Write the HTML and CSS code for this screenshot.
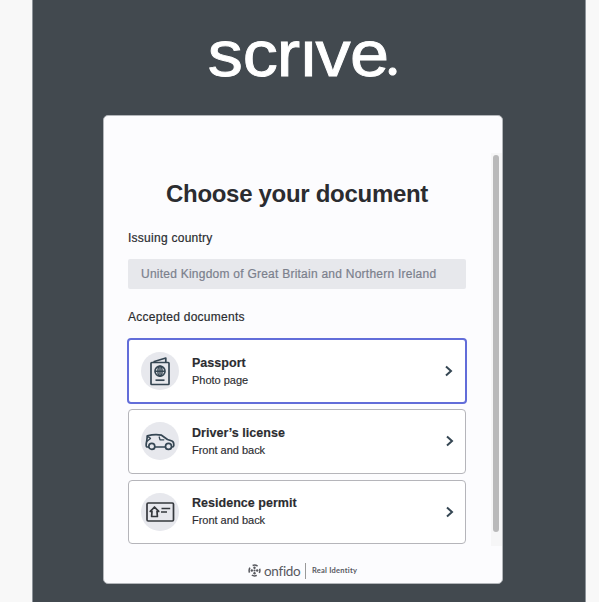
FILE: index.html
```
<!DOCTYPE html>
<html lang="en">
<head>
<meta charset="utf-8">
<title>Choose your document</title>
<link rel="stylesheet" href="styles.css">
</head>
<body>
<main class="panel">
  <svg class="logo" width="210" height="84" viewBox="0 -16 210 84" role="img" aria-label="scrive.">
    <text class="wordmark" transform="translate(0 45) scale(1.08 1)" x="1.7 34.1 65.6 85.8 101.3 133.4" y="0">scrıve</text>
    <text class="wordmark dot" x="180" y="44">.</text>
  </svg>
  <section class="card">
    <div class="scroll">
      <div class="content">
        <h1>Choose your document</h1>
        <div class="label country-label">Issuing country</div>
        <div class="country">United Kingdom of Great Britain and Northern Ireland</div>
        <div class="label docs-label">Accepted documents</div>
        <div class="documents">
          <button class="document selected">
            <span class="icon"><svg width="38" height="38" viewBox="0 0 38 38"><g fill="none" stroke="#354653" stroke-width="1.7" stroke-linejoin="round"><rect x="10" y="10.5" width="18" height="22" rx=".8"/><path d="M12.5 9.8 24.8 6V10"/><circle cx="19" cy="19.2" r="5"/><ellipse cx="19" cy="19.2" rx="2.1" ry="5" stroke-width="1.4"/><path d="M14 19.2H24M19 14.2V24.2" stroke-width="1.4"/><path d="M14.5 28.2H23.5"/></g></svg></span>
            <span class="copy"><b>Passport</b><span>Photo page</span></span>
            <svg class="chevron" width="10" height="12" viewBox="0 0 10 12"><path d="M2 1.5 7 6 2 10.5"/></svg>
          </button>
          <button class="document">
            <span class="icon"><svg width="38" height="38" viewBox="0 0 38 38"><g fill="none" stroke="#354653" stroke-width="1.7" stroke-linejoin="round" stroke-linecap="round"><path d="M7.4 25H6Q5 24.8 5.2 22L5.8 18.5 6.3 13.8Q14 12 20.5 13.2L26.5 17.5 31 19Q33 19.8 32.8 23.5 32.7 25 31.3 25M14.1 25H24"/><circle cx="10.8" cy="24.4" r="3"/><circle cx="27.5" cy="24.4" r="3"/><path d="M6.3 14.2 9.5 16.4 6 19.2M18.2 15 19 17.8H22.8" stroke-width="1.3"/></g></svg></span>
            <span class="copy"><b>Driver’s license</b><span>Front and back</span></span>
            <svg class="chevron" width="10" height="12" viewBox="0 0 10 12"><path d="M2 1.5 7 6 2 10.5"/></svg>
          </button>
          <button class="document">
            <span class="icon"><svg width="38" height="38" viewBox="0 0 38 38"><g fill="none" stroke="#35383d" stroke-width="1.7" stroke-linejoin="round"><rect x="6" y="10" width="26.5" height="18" rx="1.2"/><path d="M13.5 14 9.3 18.4H11L10.6 23.5H16.4L16 18.4H17.7ZM20.5 15.5H29.2M20 19H26"/></g></svg></span>
            <span class="copy"><b>Residence permit</b><span>Front and back</span></span>
            <svg class="chevron" width="10" height="12" viewBox="0 0 10 12"><path d="M2 1.5 7 6 2 10.5"/></svg>
          </button>
        </div>
      </div>
      <div class="track"><div class="thumb"></div></div>
    </div>
    <footer>
      <svg width="13" height="13" viewBox="0 0 13 13"><g fill="none" stroke="#57585e"><circle cx="6.5" cy="6.5" r="5.4" stroke-width="1.5" stroke-dasharray="5.2 3.28" stroke-dashoffset="2.6"/></g><g fill="#57585e"><circle cx="6.5" cy="3.8" r="1.2"/><circle cx="6.5" cy="9.2" r="1.2"/><circle cx="3.8" cy="6.5" r="1.2"/><circle cx="9.2" cy="6.5" r="1.2"/><circle cx="6.5" cy="6.5" r="1.1"/></g></svg>
      <span class="brand">onfido</span>
      <span class="tagline">Real Identity</span>
    </footer>
  </section>
</main>
</body>
</html>
```
FILE: styles.css
```
* { box-sizing: border-box; }
body {
  margin: 0;
  height: 602px;
  overflow: hidden;
  background: #f8f8f8;
  color: #2b2c30;
  font-family: "Liberation Sans", Arial, sans-serif;
}
.panel {
  width: 554px;
  height: 602px;
  margin-left: 32px;
  padding-top: 15px;
  background: #42494f;
  border: solid #8e949a;
  border-width: 0 1px;
}
.logo { display: block; margin-left: 173px; overflow: visible; }
.wordmark {
  fill: #fff;
  font-family: "Liberation Sans", Arial, sans-serif;
  font-size: 65px;
  stroke: #fff;
  stroke-width: .9;
}
.dot { font-family: Lato, sans-serif; font-size: 56px; }
.card {
  width: 400px;
  height: 469px;
  margin: 16px 0 0 70px;
  padding-top: 37px;
  background: #fcfcfe;
  border: 1px solid #b3b6ba;
  border-radius: 5px;
}
.scroll { display: flex; justify-content: space-between; height: 393px; }
.content { width: 363px; padding-left: 23px; }
h1 {
  margin: 27px 0 0 39px;
  font-size: 24px;
  line-height: 28px;
  letter-spacing: -.3px;
  white-space: nowrap;
}
.label { margin-left: 1px; font-size: 12px; line-height: 16px; letter-spacing: .26px; -webkit-text-stroke: .2px; }
.country-label { margin-top: 22px; }
.country {
  width: 338px;
  height: 30px;
  margin: 13px 0 0 1px;
  padding-left: 13px;
  border-radius: 2px;
  background: #e7e8ec;
  color: #7b808c;
  font-size: 12px;
  line-height: 30px;
  letter-spacing: .24px;
  white-space: nowrap;
  -webkit-text-stroke: .2px;
}
.docs-label { margin-top: 20px; }
.documents { display: grid; gap: 6px; width: 340px; margin-top: 13px; }
.document {
  display: flex;
  align-items: center;
  width: 338px;
  height: 64.5px;
  margin: 0 0 0 1px;
  padding: 0 10px 0 12px;
  border: 1px solid #b5b5ba;
  border-radius: 4px;
  background: #fff;
  color: inherit;
  font: inherit;
  text-align: left;
}
.document.selected { width: 340px; height: 66px; margin: 0 0 -1px; padding: 0 11px 0 12px; border: 2px solid #626dd9; }
.icon { width: 38px; height: 38px; border-radius: 50%; background: #e7e8ed; }
.icon svg { display: block; }
.copy { display: grid; flex: 1; margin-left: 13px; font-size: 11px; line-height: 17px; -webkit-text-stroke: .15px; }
.copy b { font-size: 12.5px; line-height: 18px; letter-spacing: .03px; }
.copy span { letter-spacing: -.02px; }
.chevron { fill: none; stroke: #354653; stroke-width: 2; }
.track { width: 11px; padding: 2px 3px 0 2px; background: #f6f6f7; }
.thumb { width: 6px; height: 377px; border-radius: 3px; background: #b9b9ba; }
footer { display: flex; align-items: center; height: 38px; padding: 11px 0 0 144px; color: #57585e; font-family: Lato, sans-serif; }
.brand { width: 41px; margin-left: 3px; font-size: 13.5px; line-height: 16px; letter-spacing: -.3px; }
.tagline { padding-left: 6px; border-left: 1px solid #999; font-family: Lato, sans-serif; font-size: 7.5px; line-height: 16px; letter-spacing: .24px; font-weight: 700; white-space: nowrap; }
```
